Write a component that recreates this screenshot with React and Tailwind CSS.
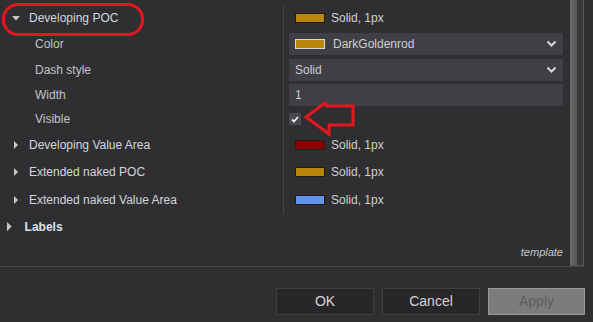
const font = { fontFamily: '"Liberation Sans", Arial, sans-serif' };

const TriDown = () => (
    <svg width="8" height="5" viewBox="0 0 8 5" className="shrink-0">
        <path d="M0 0 L8 0 L4 4.5 Z" fill="#c8c8c8" />
    </svg>
);

const TriRight = ({ size = 1 }) => (
    <svg width={4 * size} height={8 * size} viewBox="0 0 4 8" className="shrink-0">
        <path d="M0 0 L4 4 L0 8 Z" fill="#c8c8c8" />
    </svg>
);

const Chevron = () => (
    <svg width="11" height="8" viewBox="0 0 11 8">
        <path d="M1.5 1.5 L5.5 5.5 L9.5 1.5" stroke="#d8d8d8" strokeWidth="2" fill="none" />
    </svg>
);

const Swatch = ({ color, light }) => (
    <span
        className={`inline-block w-[30px] h-[10px] border ${light ? "border-[#d8d8d8]" : "border-[#1e1e1e]"}`}
        style={{ backgroundColor: color }}
    />
);

const LineValue = ({ color }) => (
    <div className="flex items-center gap-[6px] pl-[6px] text-[12px] text-[#d0d0d0]">
        <Swatch color={color} />
        <span>Solid, 1px</span>
    </div>
);

const Row = ({ h, left, right }) => (
    <div className={`flex ${h}`}>
        <div className="w-[284px] shrink-0 border-r border-[#444447] flex items-center">{left}</div>
        <div className="flex-1 min-w-0 flex items-center pl-[5px] pr-[7px]">{right}</div>
    </div>
);

const Header = ({ children }) => (
    <div className="flex items-center pl-[14px] gap-[11px] text-[12px] text-[#d2d6dc]">
        <TriRight />
        <span>{children}</span>
    </div>
);

const Sub = ({ children }) => (
    <span className="pl-[35px] text-[12px] text-[#c4c4c4]">{children}</span>
);

const Field = ({ children }) => (
    <div className="w-full h-[22px] bg-[#3f3f45] flex items-center justify-between pl-[6px] pr-[6px] text-[12px] text-[#d0d0d0]">
        {children}
    </div>
);

const App = () => {
    return (
        <div className="relative w-[593px] h-[322px] bg-[#2f2f31] flex flex-col overflow-hidden" style={font}>

            {/* PROPERTY GRID */}
            <div className="h-[267px] w-[584px] flex border-b border-[#47474a]">
                <div className="flex-1 min-w-0 flex flex-col pt-[5px]">

                    <Row
                        h="h-[26px]"
                        left={
                            <div className="flex items-center pl-[12px] gap-[9px] text-[12px] text-[#d2d6dc]">
                                <TriDown />
                                <span>Developing POC</span>
                            </div>
                        }
                        right={<LineValue color="#b8860b" />}
                    />

                    <Row
                        h="h-[26px]"
                        left={<Sub>Color</Sub>}
                        right={
                            <Field>
                                <span className="flex items-center gap-[8px]">
                                    <Swatch color="#b8860b" light />
                                    DarkGoldenrod
                                </span>
                                <Chevron />
                            </Field>
                        }
                    />

                    <Row
                        h="h-[25px]"
                        left={<Sub>Dash style</Sub>}
                        right={
                            <Field>
                                <span>Solid</span>
                                <Chevron />
                            </Field>
                        }
                    />

                    <Row
                        h="h-[25px]"
                        left={<Sub>Width</Sub>}
                        right={
                            <Field>
                                <span>1</span>
                            </Field>
                        }
                    />

                    <Row
                        h="h-[24px]"
                        left={<Sub>Visible</Sub>}
                        right={
                            <span className="w-[12px] h-[12px] bg-[#48484e] flex items-center justify-center">
                                <svg width="8" height="7" viewBox="0 0 8 7">
                                    <path d="M1 3.5 L3 5.5 L7 1" stroke="#f0f0f0" strokeWidth="1.8" fill="none" />
                                </svg>
                            </span>
                        }
                    />

                    <Row
                        h="h-[27px]"
                        left={<Header>Developing Value Area</Header>}
                        right={<LineValue color="#8b0000" />}
                    />

                    <Row
                        h="h-[28px]"
                        left={<Header>Extended naked POC</Header>}
                        right={<LineValue color="#b8860b" />}
                    />

                    <Row
                        h="h-[28px]"
                        left={<Header>Extended naked Value Area</Header>}
                        right={<LineValue color="#6495ed" />}
                    />

                    <div className="h-[26px] flex items-center pl-[7px] gap-[13px] text-[12px] font-bold text-[#dde2ea]">
                        <TriRight size={1.15} />
                        <span>Labels</span>
                    </div>

                    <div className="flex-1 flex items-end justify-end pr-[7px] pb-[6px]">
                        <span className="text-[11px] italic text-[#c8c8c8]">template</span>
                    </div>
                </div>

                {/* SCROLLBAR */}
                <div className="w-[14px] shrink-0 flex border-b border-[#555558]">
                    <div className="w-[7px] bg-gradient-to-r from-[#6a6a6a] to-[#555557]" />
                    <div className="w-[6px] bg-[#37373a]" />
                    <div className="w-[1px] bg-[#58585b]" />
                </div>
            </div>

            {/* BUTTONS */}
            <div className="flex-1 flex justify-end items-start pt-[21px] pr-[8px] gap-[8px] text-[14px]">
                <button className="w-[98px] h-[27px] bg-[#27272a] border border-[#404043] text-[#d4d4d4]">OK</button>
                <button className="w-[98px] h-[27px] bg-[#27272a] border border-[#404043] text-[#d4d4d4]">Cancel</button>
                <button className="w-[97px] h-[27px] bg-[#7c7c7c] border border-[#9a9a9a] text-[#5e5e5e]">Apply</button>
            </div>

            {/* ANNOTATIONS */}
            <div className="absolute left-[2px] top-[3px] w-[142px] h-[33px] border-[3px] border-[#e4161e] rounded-[16px] pointer-events-none" />
            <svg className="absolute left-0 top-0 pointer-events-none" width="593" height="322">
                <path
                    d="M306 117 L325 103 L327 106 L353 106 L353 125 L329 125 L329 134 Z"
                    stroke="#e4161e"
                    strokeWidth="3"
                    fill="none"
                    strokeLinejoin="miter"
                />
            </svg>
        </div>
    );
};

export default App;
